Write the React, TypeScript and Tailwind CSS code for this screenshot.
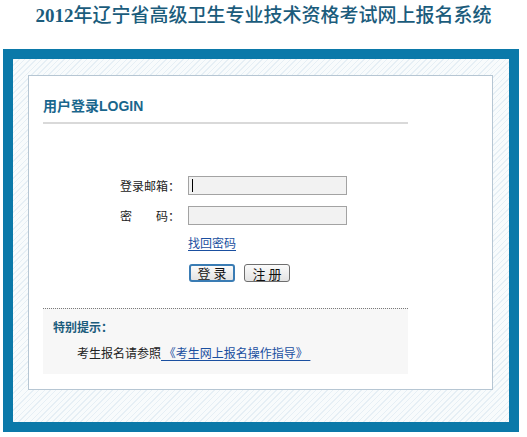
import React from "react";

export default function App() {
  return (
    <div className="w-[527px] h-[437px] bg-white overflow-hidden" style={{ fontFamily: '"Noto Sans CJK SC", sans-serif' }}>
      <h1
        className="h-[49px] pt-[5px] text-center text-[19px] leading-[22px] font-medium text-[#1b5c7c]"
        style={{ fontFamily: '"Liberation Serif", "Noto Sans CJK SC", serif' }}
      >
        <span className="font-bold">2012</span>年辽宁省高级卫生专业技术资格考试网上报名系统
      </h1>
      <div className="ml-[3px] w-[516px] border-[10px] border-[#0b79a9] bg-[repeating-linear-gradient(135deg,#e6eff5_0px,#e6eff5_1px,#f8fbfc_1px,#f8fbfc_4px)] pt-[16px] pl-[15px] pr-[16px] pb-[32px]">
        <div className="border border-[#b6c6d3] bg-white pl-[14px] pt-[22px] pb-[15px]">
          <div className="w-[365px] h-[26px] border-b-2 border-[#d9d9d9] text-[14px] leading-[16px] font-bold text-[#19668c]" style={{ fontFamily: '"Liberation Sans", "Noto Sans CJK SC", sans-serif' }}>
            用户登录LOGIN
          </div>
          <div className="mt-[52px] flex flex-col text-[12px] leading-[19px] text-[#222]">
            <div className="flex items-center">
              <span className="ml-[77px] w-[68px]">登录邮箱：</span>
              <div className="relative w-[159px] h-[19px] border border-[#a3a3a3] bg-[#f2f2f2]">
                <span className="absolute left-[3px] top-[2px] w-[1px] h-[13px] bg-black"></span>
              </div>
            </div>
            <div className="flex items-center mt-[11px]">
              <span className="ml-[77px] w-[68px] whitespace-pre">密　　码：</span>
              <div className="w-[159px] h-[19px] border border-[#a3a3a3] bg-[#f2f2f2]"></div>
            </div>
            <div className="mt-[11px] ml-[145px] leading-[14px]">
              <a className="text-[#1a4fa0] underline underline-offset-2">找回密码</a>
            </div>
            <div className="mt-[14px] ml-[146px] flex gap-[9px]">
              <button className="w-[46px] h-[18px] rounded-[3px] border-2 border-[#3a7cb4] bg-[linear-gradient(#fbfbfb,#e3e3e3)] text-[13px] leading-[14px] text-[#111] whitespace-pre">
                登 录
              </button>
              <button className="w-[46px] h-[18px] rounded-[3px] border border-[#6e6e6e] bg-[linear-gradient(#fbfbfb,#e3e3e3)] text-[13px] leading-[15px] text-[#111] whitespace-pre">
                注 册
              </button>
            </div>
          </div>
          <div className="mt-[26px] w-[365px] h-[66px] border-t border-dotted border-[#7a7a7a] bg-[#f7f7f7] pt-[11px] text-[12px] leading-[14px]">
            <div className="pl-[10px] font-bold text-[#1b5c7c]">特别提示：</div>
            <div className="mt-[12px] pl-[34px] text-[#222] whitespace-pre">
              考生报名请参照<a className="text-[#1a4fa0] underline underline-offset-2"> 《考生网上报名操作指导》 </a>
            </div>
          </div>
        </div>
      </div>
    </div>
  );
}
